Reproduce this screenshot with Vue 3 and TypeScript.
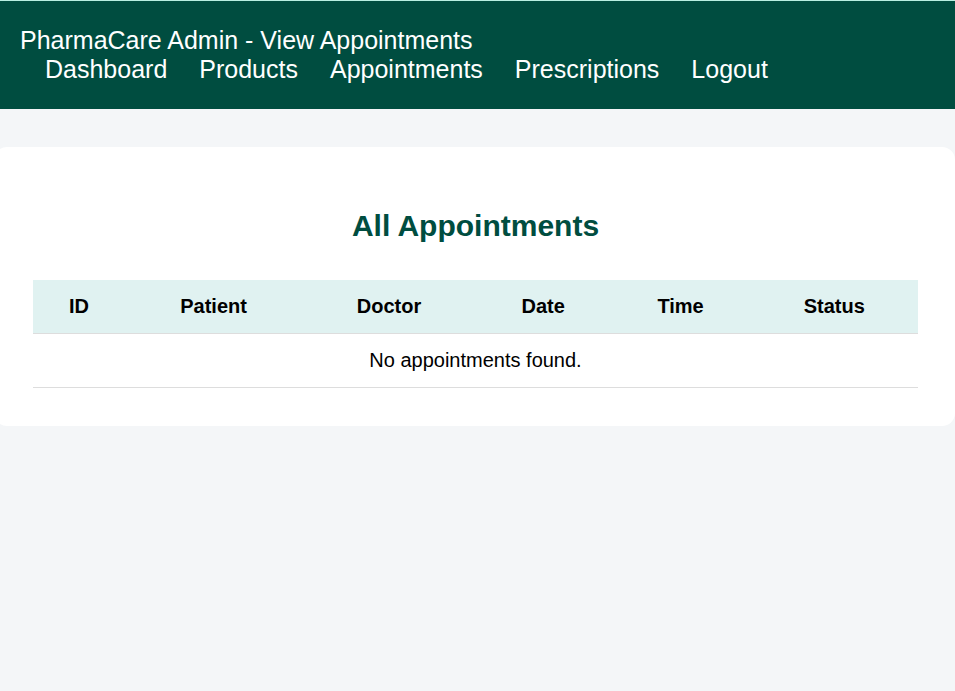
<script setup lang="ts">
interface NavLink {
  label: string
  href: string
}

interface Appointment {
  id: number
  patient: string
  doctor: string
  date: string
  time: string
  status: string
}

const links: NavLink[] = [
  { label: 'Dashboard', href: '#dashboard' },
  { label: 'Products', href: '#products' },
  { label: 'Appointments', href: '#appointments' },
  { label: 'Prescriptions', href: '#prescriptions' },
  { label: 'Logout', href: '#logout' },
]

const columns: string[] = ['ID', 'Patient', 'Doctor', 'Date', 'Time', 'Status']
const appointments: Appointment[] = []
</script>

<template>
  <header class="navbar">
    <div class="brand">PharmaCare Admin - View Appointments</div>
    <nav class="links">
      <a v-for="link in links" :key="link.label" :href="link.href">{{ link.label }}</a>
    </nav>
  </header>
  <main class="container">
    <h2>All Appointments</h2>
    <table>
      <thead>
        <tr>
          <th v-for="column in columns" :key="column" scope="col">{{ column }}</th>
        </tr>
      </thead>
      <tbody>
        <tr v-for="item in appointments" :key="item.id">
          <td>{{ item.id }}</td>
          <td>{{ item.patient }}</td>
          <td>{{ item.doctor }}</td>
          <td>{{ item.date }}</td>
          <td>{{ item.time }}</td>
          <td>{{ item.status }}</td>
        </tr>
        <tr v-if="appointments.length === 0">
          <td :colspan="columns.length">No appointments found.</td>
        </tr>
      </tbody>
    </table>
  </main>
</template>

<style>
body {
  margin: 0;
  background: #f4f6f8;
  font-family: "Liberation Sans", Arial, sans-serif;
}
</style>

<style scoped>
.navbar {
  padding: 25px 20px;
  border-top: 1px solid #b9efe2;
  background: #004d40;
  color: #fff;
  font-size: 25px;
  line-height: 29px;
}

.links {
  display: flex;
  gap: 32px;
  padding-left: 25px;
}

.links a {
  color: #fff;
  text-decoration: none;
}

.container {
  margin: 38px 0 0 -6px;
  padding: 60px 37px 38px 39px;
  border-radius: 13px;
  background: #fff;
}

h2 {
  margin: 0 0 36px;
  color: #004d40;
  font-size: 30px;
  line-height: 37px;
  text-align: center;
}

table {
  width: 100%;
  border-collapse: collapse;
  font-size: 20px;
  line-height: 23px;
}

th,
td {
  padding: 15px;
  border-bottom: 1px solid #ddd;
  text-align: center;
}

th {
  background: #e0f2f1;
}
</style>
